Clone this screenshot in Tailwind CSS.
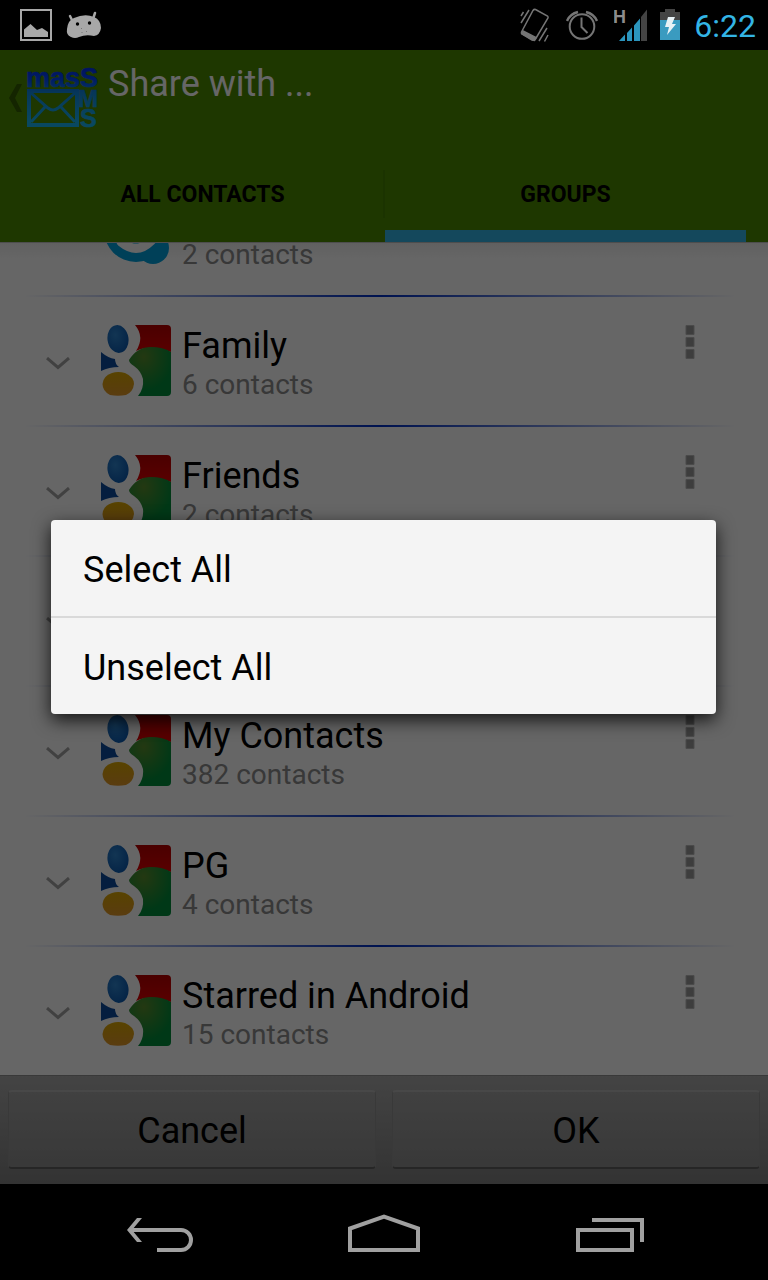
<!DOCTYPE html>
<html lang="en">
<head>
  <meta charset="UTF-8">
  <meta name="viewport" content="width=device-width, initial-scale=1.0">
  <title>masSMS - Share with ...</title>
  <script src="https://cdn.jsdelivr.net/npm/@tailwindcss/browser@4"></script>
</head>
<body class="h-screen flex flex-col bg-black text-black font-['Roboto',sans-serif]">

  <!-- shared icons -->
  <svg class="absolute size-0" aria-hidden="true">
    <defs>
      <radialGradient id="gBlue" cx=".4" cy=".35" r=".7"><stop offset="0" stop-color="#2f86d0"/><stop offset="1" stop-color="#0b58ae"/></radialGradient>
      <linearGradient id="gYellow" x1="0" y1="0" x2="0" y2="1"><stop offset="0" stop-color="#dca800"/><stop offset="1" stop-color="#e0962a"/></linearGradient>
      <linearGradient id="gRed" x1="0" y1="0" x2="0" y2="1"><stop offset="0" stop-color="#b80000"/><stop offset="1" stop-color="#e00000"/></linearGradient>
      <radialGradient id="gGreen" cx=".35" cy=".2" r=".7"><stop offset="0" stop-color="#5a8c2c"/><stop offset="1" stop-color="#008c3a"/></radialGradient>
      <linearGradient id="gLogo" gradientUnits="userSpaceOnUse" x1="0" y1="0" x2="0" y2="60"><stop offset="0" stop-color="#0026e8"/><stop offset=".3" stop-color="#0048ff"/><stop offset=".5" stop-color="#1088e0"/><stop offset="1" stop-color="#18b4f0"/></linearGradient>
    </defs>
    <symbol id="google" viewBox="0 0 70 71">
      <ellipse cx="17" cy="14" rx="10.5" ry="14" transform="rotate(-8 17 14)" fill="url(#gBlue)"/>
      <path d="M0 27 Q7 33 14 34 Q14 39 18 42 Q8 42 0 46Z" fill="#0d4c9e"/>
      <path d="M11 48 Q17 46 24 48 Q33 52 33 59 Q32 67 25 70 Q17 71.500 9 70 Q1.500 66 1.500 59 Q2 51 11 48Z" fill="url(#gYellow)"/>
      <path d="M34 0 H66 Q70 0 70 4 V27 Q50 19 35 26 Q44 12 34 0Z" fill="url(#gRed)"/>
      <path d="M28 35 Q36 22 50 22 Q62 22 70 27 V67 Q70 71 66 71 H37 Q43 64 42 54 Q40 46 33 41 Q28 38 28 35Z" fill="url(#gGreen)"/>
    </symbol>
    <symbol id="chevron" viewBox="0 0 24 14">
      <path d="M1 1 L12 10.500 L23 1" fill="none" stroke="#a4a4a4" stroke-width="3"/>
    </symbol>
    <symbol id="dots" viewBox="0 0 10 36">
      <path d="M1 .500h8v9h-8z M1 12.500h8v9h-8z M1 24.500h8v9h-8z" fill="#9a9a9a" stroke="#b8b8b8" stroke-width="1"/>
    </symbol>
  </svg>

  <!-- status bar -->
  <div class="h-[50px] shrink-0 flex items-center justify-between pl-5 pr-3">
    <div class="flex items-center gap-3.5">
      <svg class="w-8 h-8" viewBox="0 0 32 32" fill="#a8a8a8">
        <rect x="1" y="1" width="30" height="30" fill="none" stroke="#a8a8a8" stroke-width="2"/>
        <path d="M4 28 V20.500 L10.500 15 L17 21 L22 19 L28 23 V28Z"/>
      </svg>
      <svg class="w-9 h-8" viewBox="0 0 36 32">
        <path d="M4 7 L7 13 M29 4 L27 10" stroke="#a8a8a8" stroke-width="2.500" stroke-linecap="round"/>
        <path d="M1 20 Q2 11 8 9 Q19 4 28 8 Q35 11 35 19 Q34 26 28 27 Q20 25 13 28 Q9 30 5 28 Q0 26 1 20Z" fill="#a8a8a8"/>
        <circle cx="11.500" cy="15" r="1.700"/><circle cx="23.500" cy="14" r="1.700"/>
        <path d="M15.500 19v1M16 23v1M20.500 22v1" stroke="#777" stroke-width="1"/>
      </svg>
    </div>
    <div class="flex items-center">
      <svg class="w-[30px] h-9 mr-4" viewBox="0 0 30 36" fill="none" stroke="#757575" stroke-width="1.500">
        <path d="M15.500 2.500 L27.500 9 Q28.500 10 28 11 L15.500 32 Q14.500 33.500 13 33 L2 27 Q1 26 1.500 25 L13 3.500 Q14 2 15.500 2.500Z"/>
        <path d="M3 24 L16 30.500 L14.500 33.500 L12 33 L2 27 Z" fill="#757575"/>
        <path d="M1 9 L3.500 5 M1 16 L9 3 M19 34 L27 21 M24.500 34.500 L28 28"/>
      </svg>
      <svg class="w-8 h-9 mr-4" viewBox="0 0 32 36" fill="none" stroke="#757575" stroke-width="2">
        <circle cx="16" cy="19.500" r="12.300"/>
        <path d="M15.500 10.500 V20 L21.500 26"/>
        <path d="M1 14 Q4 7 12 5 M20 5 Q28 7 31 14" stroke-width="2.500"/>
      </svg>
      <svg class="w-[34px] h-9 mr-3" viewBox="0 0 34 36">
        <text x="-1" y="16" font-family="Liberation Sans, sans-serif" font-weight="700" font-size="18" fill="#8c8c8c">H</text>
        <path d="M5 34 L11 27.500 V34Z M13 34 V26 L18 20.500 V34Z M20 34 V18.500 L26 11.500 V34Z" fill="#2b95bd"/>
        <path d="M27 34 V10 L33 2.500 V34Z" fill="#444"/>
      </svg>
      <svg class="w-5 h-9 mr-3.5" viewBox="0 0 20 36">
        <path d="M0 5 H5 V2 H15 V5 H20 V13 H0Z" fill="#444"/>
        <path d="M0 13 H20 V33 H0Z" fill="#3a9bc0"/>
        <path d="M8 10 H15 L12 17 H16 L7 28 L9 20 H5Z" fill="#e8f2f6"/>
      </svg>
      <time class="pt-0.5 text-[32px] leading-[48px] text-[#33b5e5]">6:22</time>
    </div>
  </div>

  <div class="relative flex-1 min-h-0 flex flex-col bg-white">

    <!-- action bar and tabs -->
    <header class="shrink-0 bg-[#4b8900]">
      <div class="h-24 flex items-start pt-3 pl-2">
        <a href="#" aria-label="Back" class="mt-5">
          <svg class="w-4 h-8" viewBox="0 0 16 32" fill="#325c00"><path d="M9 2 H14 L7 16 L14 30 H9 L1 16Z"/></svg>
        </a>
        <svg class="w-[76px] h-[68px]" viewBox="0 0 76 68" fill="url(#gLogo)" stroke="url(#gLogo)" stroke-width=".6" font-family="Liberation Sans, sans-serif" font-weight="700">
          <text x="2" y="25" font-size="27">masS</text>
          <text x="54" y="45" font-size="24">M</text>
          <text x="56" y="65" font-size="25">S</text>
          <g fill="none" stroke-width="4">
            <rect x="5" y="29" width="48" height="34"/>
            <path d="M7 31 L24 46 Q29 50 34 46 L51 31 M7 60 L21 45 M37 45 L51 60" stroke-width="3"/>
          </g>
        </svg>
        <h1 class="ml-2 text-[36px] leading-11 text-white">Share with ...</h1>
      </div>
      <nav class="h-24 px-[22px] flex text-[23px] font-bold">
        <a href="#" class="flex-1 flex items-center justify-center pt-0.5">ALL CONTACTS</a>
        <span class="w-0.5 h-12 self-center bg-[#458000]"></span>
        <a href="#" class="flex-1 flex items-center justify-center border-b-12 border-[#33b5e5] pt-3.5">GROUPS</a>
      </nav>
    </header>
    <div class="h-px shrink-0 bg-[#c0c0c0]"></div>

    <!-- groups, scrolled to the end -->
    <ul class="flex-1 min-h-0 flex flex-col justify-end overflow-hidden bg-linear-to-b from-[#f0f0f0] to-white to-[16px]">
      <li class="h-32 shrink-0 pl-[101px] pt-7 flex gap-[11px]">
        <svg class="w-[70px] h-[71px]" viewBox="0 0 70 71" fill="#00a0dc">
          <circle cx="35" cy="35" r="32"/><circle cx="20" cy="19" r="17"/><circle cx="52" cy="53" r="16"/>
          <path d="M49 23 Q35 12 24 22 Q20 33 36 37 Q50 40 50 46 Q36 60 20 47" fill="none" stroke="#fff" stroke-width="9" stroke-linecap="round"/>
        </svg>
        <p class="mt-11 text-[28px] leading-8 text-[#8c8c8c]">2 contacts</p>
      </li>
      <li class="h-0.5 shrink-0 ml-6 mr-8 bg-linear-to-r from-transparent via-[#0030c8] to-transparent"></li>
      <li class="h-32 shrink-0 pl-[46px] pr-[73px] pt-7 flex items-start gap-[11px]">
        <button type="button" aria-label="Expand Family" class="mt-8 mr-5"><svg class="w-6 h-3.5"><use href="#chevron"/></svg></button>
        <svg class="w-[70px] h-[71px]"><use href="#google"/></svg>
        <div class="flex-1">
          <h2 class="text-[36px] leading-[42px]">Family</h2>
          <p class="text-[28px] leading-9 text-[#8c8c8c]">6 contacts</p>
        </div>
        <button type="button" aria-label="Family options"><svg class="w-2.5 h-9"><use href="#dots"/></svg></button>
      </li>
      <li class="h-0.5 shrink-0 ml-6 mr-8 bg-linear-to-r from-transparent via-[#0030c8] to-transparent"></li>
      <li class="h-32 shrink-0 pl-[46px] pr-[73px] pt-7 flex items-start gap-[11px]">
        <button type="button" aria-label="Expand Friends" class="mt-8 mr-5"><svg class="w-6 h-3.5"><use href="#chevron"/></svg></button>
        <svg class="w-[70px] h-[71px]"><use href="#google"/></svg>
        <div class="flex-1">
          <h2 class="text-[36px] leading-[42px]">Friends</h2>
          <p class="text-[28px] leading-9 text-[#8c8c8c]">2 contacts</p>
        </div>
        <button type="button" aria-label="Friends options"><svg class="w-2.5 h-9"><use href="#dots"/></svg></button>
      </li>
      <li class="h-0.5 shrink-0 ml-6 mr-8 bg-linear-to-r from-transparent via-[#0030c8] to-transparent"></li>
      <li class="h-32 shrink-0 pl-[46px] pr-[73px] pt-7 flex items-start gap-[11px]">
        <button type="button" aria-label="Expand group" class="mt-8 mr-5"><svg class="w-6 h-3.5"><use href="#chevron"/></svg></button>
        <svg class="w-[70px] h-[71px]"><use href="#google"/></svg>
      </li>
      <li class="h-0.5 shrink-0 ml-6 mr-8 bg-linear-to-r from-transparent via-[#0030c8] to-transparent"></li>
      <li class="h-32 shrink-0 pl-[46px] pr-[73px] pt-7 flex items-start gap-[11px]">
        <button type="button" aria-label="Expand My Contacts" class="mt-8 mr-5"><svg class="w-6 h-3.5"><use href="#chevron"/></svg></button>
        <svg class="w-[70px] h-[71px]"><use href="#google"/></svg>
        <div class="flex-1">
          <h2 class="text-[36px] leading-[42px]">My Contacts</h2>
          <p class="text-[28px] leading-9 text-[#8c8c8c]">382 contacts</p>
        </div>
        <button type="button" aria-label="My Contacts options"><svg class="w-2.5 h-9"><use href="#dots"/></svg></button>
      </li>
      <li class="h-0.5 shrink-0 ml-6 mr-8 bg-linear-to-r from-transparent via-[#0030c8] to-transparent"></li>
      <li class="h-32 shrink-0 pl-[46px] pr-[73px] pt-7 flex items-start gap-[11px]">
        <button type="button" aria-label="Expand PG" class="mt-8 mr-5"><svg class="w-6 h-3.5"><use href="#chevron"/></svg></button>
        <svg class="w-[70px] h-[71px]"><use href="#google"/></svg>
        <div class="flex-1">
          <h2 class="text-[36px] leading-[42px]">PG</h2>
          <p class="text-[28px] leading-9 text-[#8c8c8c]">4 contacts</p>
        </div>
        <button type="button" aria-label="PG options"><svg class="w-2.5 h-9"><use href="#dots"/></svg></button>
      </li>
      <li class="h-0.5 shrink-0 ml-6 mr-8 bg-linear-to-r from-transparent via-[#0030c8] to-transparent"></li>
      <li class="h-32 shrink-0 pl-[46px] pr-[73px] pt-7 flex items-start gap-[11px]">
        <button type="button" aria-label="Expand Starred in Android" class="mt-8 mr-5"><svg class="w-6 h-3.5"><use href="#chevron"/></svg></button>
        <svg class="w-[70px] h-[71px]"><use href="#google"/></svg>
        <div class="flex-1">
          <h2 class="text-[36px] leading-[42px]">Starred in Android</h2>
          <p class="text-[28px] leading-9 text-[#8c8c8c]">15 contacts</p>
        </div>
        <button type="button" aria-label="Starred in Android options"><svg class="w-2.5 h-9"><use href="#dots"/></svg></button>
      </li>
    </ul>

    <footer class="shrink-0 px-2 pt-3.5 pb-[15px] flex gap-4 border-t border-[#909090] bg-linear-to-b from-[#aaa] to-[#808080]">
      <button type="button" class="flex-1 h-[79px] pt-0.5 rounded-sm text-[36px] border-t-2 border-x border-b-2 border-t-[#b4b4b4] border-x-[#909090] border-b-[#606060] bg-linear-to-b from-[#a2a2a2] to-[#8e8e8e]">Cancel</button>
      <button type="button" class="flex-1 h-[79px] pt-0.5 rounded-sm text-[36px] border-t-2 border-x border-b-2 border-t-[#b4b4b4] border-x-[#909090] border-b-[#606060] bg-linear-to-b from-[#a2a2a2] to-[#8e8e8e]">OK</button>
    </footer>

    <!-- dimmed backdrop with the dialog -->
    <div class="absolute inset-0 flex items-center pl-[51px] pr-[52px] bg-black/60">
      <div role="dialog" aria-label="Selection" class="flex-1 flex flex-col rounded-sm bg-[#f4f4f4] text-[36px] shadow-[0_6px_18px_rgba(0,0,0,0.8)]">
        <button type="button" class="h-24 px-8 pt-1 text-left">Select All</button>
        <div class="h-0.5 bg-[#d9d9d9]"></div>
        <button type="button" class="h-24 px-8 pt-1 text-left">Unselect All</button>
      </div>
    </div>
  </div>

  <!-- system navigation -->
  <nav class="h-24 shrink-0 px-12 grid grid-cols-3 justify-items-center">
    <button type="button" aria-label="Back">
      <svg class="w-20 h-24" viewBox="0 0 80 96" fill="none" stroke="#a0a0a0" stroke-width="4">
        <path d="M10 46 H61 A10 10 0 0 1 61 66 H37"/>
        <path d="M17 34 H22 L12 46 L22 58 H17 L7 46Z" fill="#a0a0a0" stroke="none"/>
      </svg>
    </button>
    <button type="button" aria-label="Home">
      <svg class="w-20 h-24" viewBox="0 0 80 96" fill="none" stroke="#a0a0a0" stroke-width="4">
        <path d="M6 66 V44.500 L40 32.500 L74 44.500 V66Z"/>
      </svg>
    </button>
    <button type="button" aria-label="Recent apps">
      <svg class="w-20 h-24" viewBox="0 0 80 96" fill="none" stroke="#a0a0a0" stroke-width="4">
        <rect x="10" y="46" width="54" height="20"/>
        <path d="M24 36 H74 V58"/>
      </svg>
    </button>
  </nav>
</body>
</html>
